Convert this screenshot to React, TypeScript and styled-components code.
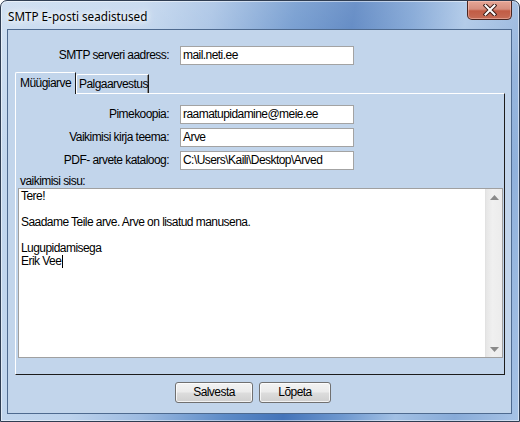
import React from "react";
import styled, { createGlobalStyle } from "styled-components";

const Global = createGlobalStyle`
  html, body { margin: 0; padding: 0; width: 520px; height: 422px; overflow: hidden; background: #ffffff; }
  body { font-family: "Liberation Sans", Arial, sans-serif; font-size: 12px; letter-spacing: -0.55px; color: #000; }
  * { box-sizing: border-box; }
`;

const Window = styled.div`
  width: 520px;
  height: 422px;
  display: flex;
  flex-direction: column;
  border: 1px solid #2f3d52;
  border-radius: 7px 7px 0 0;
  padding: 0 7px 7px 6px;
  background:
    linear-gradient(180deg, rgba(255, 255, 255, 0.22) 0%, rgba(255, 255, 255, 0) 40%),
    linear-gradient(100deg, #c4d8ee 0%, #bcd2ec 24%, #9dbbe1 36%, #5e8cc8 50%, #4474b9 60%, #6e98cf 70%, #a2c0e4 79%, #88abd8 89%, #a7c3e6 100%);
  box-shadow: inset 0 0 0 1px rgba(255, 255, 255, 0.5);
  overflow: hidden;
`;

const TitleBar = styled.div`
  height: 28px;
  display: flex;
  justify-content: space-between;
  align-items: flex-start;
  flex-shrink: 0;
`;

const TitleText = styled.div`
  margin: 8px 0 0 1px;
  font-family: "Noto Sans", "Open Sans", sans-serif;
  font-size: 11.7px;
  letter-spacing: 0;
  line-height: 14px;
  color: #000;
  text-shadow: 0 0 5px #ffffff, 0 0 9px rgba(255, 255, 255, 0.9), 0 0 14px rgba(255, 255, 255, 0.7);
`;

const CloseButton = styled.div`
  width: 45px;
  height: 19px;
  border: 1px solid #4a2520;
  border-top: none;
  border-radius: 0 0 5px 5px;
  background: linear-gradient(180deg, #e6a696 0%, #d68e7e 45%, #c25c45 55%, #c66c56 100%);
  box-shadow: inset 0 0 0 1px rgba(255, 210, 200, 0.45);
  display: flex;
  align-items: center;
  justify-content: center;
`;

const Client = styled.div`
  flex: 1;
  display: flex;
  flex-direction: column;
  border: 1px solid #4e6a8f;
  background: #c2d5eb;
  padding: 16px 6px 10px 7px;
`;

const FormGrid = styled.div<{ $labelWidth: number }>`
  display: grid;
  grid-template-columns: ${(p) => p.$labelWidth}px 174px;
  grid-auto-rows: 19px;
  column-gap: 11px;
  row-gap: 4px;
`;

const Label = styled.div`
  text-align: right;
  line-height: 19px;
  white-space: nowrap;
`;

const Field = styled.div`
  height: 19px;
  border: 1px solid #a3a3a3;
  background: #ffffff;
  padding: 0 2px;
  line-height: 17px;
  white-space: nowrap;
  overflow: hidden;
`;

const TabStrip = styled.div`
  margin-top: 7px;
  height: 21px;
  display: flex;
  align-items: flex-end;
  position: relative;
  z-index: 1;
  flex-shrink: 0;
`;

const Tab = styled.div<{ $active?: boolean; $width: number }>`
  width: ${(p) => p.$width}px;
  height: ${(p) => (p.$active ? 22 : 19)}px;
  margin-bottom: ${(p) => (p.$active ? -1 : 0)}px;
  border-left: 1px solid #ffffff;
  border-top: 1px solid #ffffff;
  border-right: 1px solid #1a1a1a;
  border-radius: 2px 0 0 0;
  box-shadow: ${(p) => (p.$active ? "none" : "inset -1px 0 0 #8a8a8a")};
  background: #c2d5eb;
  padding: ${(p) => (p.$active ? "3px 0 0 4px" : "2px 0 0 2px")};
  line-height: 14px;
  white-space: nowrap;
`;

const Panel = styled.div`
  height: 282px;
  flex-shrink: 0;
  display: flex;
  flex-direction: column;
  border-top: 1px solid #ffffff;
  border-left: 1px solid #ffffff;
  border-right: 1px solid #1c1c1c;
  border-bottom: 1px solid #1c1c1c;
  padding: 11px 1px 16px 2px;
`;

const MemoLabel = styled.div`
  margin-top: 4px;
  height: 14px;
  line-height: 14px;
  padding-left: 2px;
`;

const Memo = styled.div`
  height: 170px;
  display: flex;
  border: 1px solid #a0a0a0;
  background: #ffffff;
`;

const MemoText = styled.div`
  flex: 1;
  padding: 1px 2px;
  line-height: 13px;
  white-space: pre;
`;

const Caret = styled.span`
  display: inline-block;
  width: 1px;
  height: 13px;
  background: #000;
  vertical-align: top;
  margin-left: 1px;
`;

const ScrollTrack = styled.div`
  width: 17px;
  background: linear-gradient(90deg, #e6e6e6 0%, #f0f0f0 40%, #ececec 100%);
  border-left: 1px solid #e2e2e2;
  display: flex;
  flex-direction: column;
  justify-content: space-between;
  align-items: center;
  padding: 6px 0 5px;
`;

const ButtonRow = styled.div`
  margin-top: 7px;
  display: flex;
  gap: 6px;
  padding-left: 160px;
`;

const Button = styled.div<{ $width: number }>`
  width: ${(p) => p.$width}px;
  height: 21px;
  border: 1px solid #707070;
  border-radius: 3px;
  background: linear-gradient(180deg, #f3f3f3 0%, #ebebeb 48%, #dddddd 52%, #cfcfcf 100%);
  box-shadow: inset 0 0 0 1px rgba(255, 255, 255, 0.75);
  display: flex;
  align-items: center;
  justify-content: center;
  line-height: 19px;
`;

const Arrow = ({ up }: { up?: boolean }) => (
  <svg width="9" height="5" viewBox="0 0 9 5">
    <polygon points={up ? "0,5 9,5 4.5,0" : "0,0 9,0 4.5,5"} fill="#8a8a8a" />
  </svg>
);

const CloseIcon = () => (
  <svg width="14" height="12" viewBox="0 0 14 12">
    <path d="M2.5 1.5 L11.5 10.5 M11.5 1.5 L2.5 10.5" stroke="#3d1d18" strokeWidth="4" strokeLinecap="square" />
    <path d="M2.5 1.5 L11.5 10.5 M11.5 1.5 L2.5 10.5" stroke="#ffffff" strokeWidth="2" strokeLinecap="square" />
  </svg>
);

export default function App() {
  return (
    <>
      <Global />
      <Window>
        <TitleBar>
          <TitleText>SMTP E-posti seadistused</TitleText>
          <CloseButton>
            <CloseIcon />
          </CloseButton>
        </TitleBar>
        <Client>
          <FormGrid $labelWidth={154}>
            <Label>SMTP serveri aadress:</Label>
            <Field>mail.neti.ee</Field>
          </FormGrid>
          <TabStrip>
            <Tab $active $width={61}>Müügiarve</Tab>
            <Tab $width={73}>Palgaarvestus</Tab>
          </TabStrip>
          <Panel>
            <FormGrid $labelWidth={151}>
              <Label>Pimekoopia:</Label>
              <Field>raamatupidamine@meie.ee</Field>
              <Label>Vaikimisi kirja teema:</Label>
              <Field>Arve</Field>
              <Label>PDF- arvete kataloog:</Label>
              <Field>C:\Users\Kaili\Desktop\Arved</Field>
            </FormGrid>
            <MemoLabel>vaikimisi sisu:</MemoLabel>
            <Memo>
              <MemoText>
                {"Tere!\n\nSaadame Teile arve. Arve on lisatud manusena.\n\nLugupidamisega\nErik Vee"}
                <Caret />
              </MemoText>
              <ScrollTrack>
                <Arrow up />
                <Arrow />
              </ScrollTrack>
            </Memo>
          </Panel>
          <ButtonRow>
            <Button $width={78}>Salvesta</Button>
            <Button $width={72}>Lõpeta</Button>
          </ButtonRow>
        </Client>
      </Window>
    </>
  );
}
